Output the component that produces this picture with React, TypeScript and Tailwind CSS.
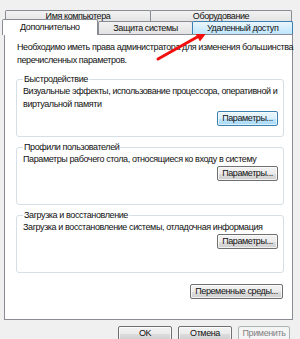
const BTN =
  'flex h-[15px] items-center justify-center whitespace-nowrap rounded-[2px] border border-[#707070] bg-[linear-gradient(#f2f2f2_0%,#ebebeb_50%,#dddddd_51%,#cfcfcf_100%)] text-[9px] leading-none shadow-[inset_0_0_0_1px_rgba(255,255,255,0.7)]';
const BTN_BLUE =
  'flex h-[15px] items-center justify-center whitespace-nowrap rounded-[2px] border border-[#3c7fb1] bg-[linear-gradient(#eaf6fd_0%,#d9f0fc_50%,#bee6fd_51%,#a7d9f5_100%)] text-[9px] leading-none shadow-[inset_0_0_0_1px_rgba(255,255,255,0.6)]';
const TAB =
  'flex items-center justify-center whitespace-nowrap border-t border-x border-[#898c95] rounded-t-[2px] bg-[linear-gradient(#f2f2f2,#e3e3e3)] text-[9px] leading-none';

function Group({
  title,
  lines,
  focused,
}: {
  title: string;
  lines: string[];
  focused?: boolean;
}) {
  return (
    <fieldset className="flex h-[64px] min-w-0 flex-col rounded-[3px] border border-[#d5dfe5] pl-[6px] pr-[5px]">
      <legend className="px-[1px] text-[9px] leading-[12px] whitespace-nowrap">{title}</legend>
      <div className="text-[9px] leading-[13px] whitespace-nowrap">
        {lines.map((l) => (
          <div key={l}>{l}</div>
        ))}
      </div>
      <div className="mt-auto mb-[7px] flex justify-end">
        <div className={`${focused ? BTN_BLUE : BTN} w-[61px]`}>
          Параметры...
        </div>
      </div>
    </fieldset>
  );
}

export default function App() {
  return (
    <div className="relative h-[339px] w-[300px] overflow-hidden bg-[#f0f0f0] font-['Liberation_Sans',Arial,sans-serif] tracking-[-0.4px] text-[#111]">
      <div className="ml-[4px] w-[289px] pt-[10px]">
        {/* back tab row */}
        <div className="ml-[1px] flex h-[12px]">
          <div className={`${TAB} w-[146px] pb-[1px]`}>Имя компьютера</div>
          <div className={`${TAB} -ml-[1px] w-[142px] pb-[1px]`}>Оборудование</div>
        </div>
        {/* front tab row */}
        <div className="relative z-10 -mt-[1px] flex h-[13px] items-end">
          <div className="-mb-[1px] -ml-[2px] flex h-[16px] w-[96px] items-center justify-center rounded-t-[2px] border-x border-t border-[#898c95] bg-white pb-[1px] text-[9px] leading-none">
            Дополнительно
          </div>
          <div className={`${TAB} h-[13px] w-[96px]`}>Защита системы</div>
          <div className="-ml-[1px] flex h-[13px] w-[101px] items-center justify-center rounded-t-[2px] border-x border-t border-[#3c7fb1] bg-[linear-gradient(#eaf6fd,#bee6fd)] text-[9px] leading-none">
            Удаленный доступ
          </div>
        </div>
        {/* panel */}
        <div className="flex h-[286px] flex-col border border-[#898c95] bg-white pl-[11px] pr-[8px]">
          <div className="mt-[6px] ml-[1px] text-[9px] leading-[13px] whitespace-nowrap">
            <div>Необходимо иметь права администратора для изменения большинства</div>
            <div>перечисленных параметров.</div>
          </div>
          <div className="mt-[6px] flex flex-col gap-[4px]">
            <Group
              title="Быстродействие"
              lines={[
                'Визуальные эффекты, использование процессора, оперативной и',
                'виртуальной памяти',
              ]}
              focused
            />
            <Group
              title="Профили пользователей"
              lines={['Параметры рабочего стола, относящиеся ко входу в систему']}
            />
            <Group
              title="Загрузка и восстановление"
              lines={['Загрузка и восстановление системы, отладочная информация']}
            />
          </div>
          <div className="mt-[11px] flex justify-end pr-[1px]">
            <div className={`${BTN} w-[93px]`}>Переменные среды...</div>
          </div>
        </div>
      </div>
      {/* dialog buttons */}
      <div className="mt-[6px] flex justify-end gap-[6px] pr-[10px]">
        <div className={`${BTN} w-[54px]`}>OK</div>
        <div className={`${BTN} w-[54px]`}>Отмена</div>
        <div className="flex h-[15px] w-[52px] items-center justify-center rounded-[2px] border border-[#adb2b5] bg-[#f4f4f4] text-[9px] leading-none text-[#838383]">
          Применить
        </div>
      </div>
      {/* red annotation arrow */}
      <svg className="pointer-events-none absolute left-0 top-0" width="300" height="339">
        <line x1="158" y1="59" x2="199" y2="36" stroke="#f20f0f" strokeWidth="3" strokeLinecap="round" />
        <polygon points="208,31 200,41.5 194.5,32" fill="#f20f0f" />
      </svg>
    </div>
  );
}
